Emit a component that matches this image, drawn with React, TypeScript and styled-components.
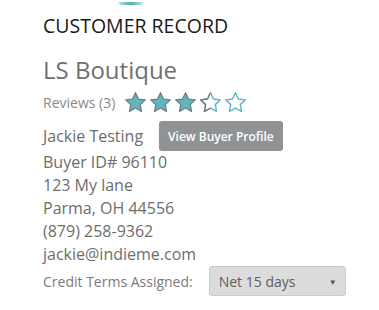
import React from "react";
import styled, { createGlobalStyle } from "styled-components";

const GlobalStyle = createGlobalStyle`
  body {
    margin: 0;
    background: #fff;
    font-family: "Open Sans", "Liberation Sans", sans-serif;
  }
`;

type Fill = "full" | "half" | "empty";

function Star({ fill }: { fill: Fill }) {
  const d =
    "M12 1.8l3.1 6.6 7.1.9-5.2 4.9 1.3 7.1L12 17.8l-6.3 3.5 1.3-7.1L1.8 9.3l7.1-.9z";
  if (fill === "full") {
    return (
      <svg width="23" height="23" viewBox="0 0 24 24">
        <path d={d} fill="#62b5bf" stroke="#6f7d80" strokeWidth="1.3" strokeLinejoin="round" />
      </svg>
    );
  }
  if (fill === "half") {
    return (
      <svg width="23" height="23" viewBox="0 0 24 24">
        <defs>
          <clipPath id="halfClip">
            <rect x="0" y="0" width="12" height="24" />
          </clipPath>
        </defs>
        <path d={d} fill="#fff" stroke="#5fb5c0" strokeWidth="1.5" strokeLinejoin="round" />
        <path d={d} fill="#fff" stroke="#6f7d80" strokeWidth="1.5" strokeLinejoin="round" clipPath="url(#halfClip)" />
      </svg>
    );
  }
  return (
    <svg width="23" height="23" viewBox="0 0 24 24">
      <path d={d} fill="#fff" stroke="#5fb5c0" strokeWidth="1.5" strokeLinejoin="round" />
    </svg>
  );
}

export default function App() {
  return (
    <Page>
      <GlobalStyle />
      <TopMark>
        <svg width="28" height="4" viewBox="0 0 28 4">
          <defs>
            <linearGradient id="topGrad" x1="0" x2="1">
              <stop offset="0" stopColor="#c9e6e8" />
              <stop offset="0.5" stopColor="#4fb0b4" />
              <stop offset="1" stopColor="#d4ecee" />
            </linearGradient>
          </defs>
          <path d="M0 0h28l-4 3H4z" fill="url(#topGrad)" />
        </svg>
      </TopMark>
      <Heading>CUSTOMER RECORD</Heading>
      <StoreName>LS Boutique</StoreName>
      <ReviewRow>
        <Reviews>Reviews (3)</Reviews>
        <Stars>
          <Star fill="full" />
          <Star fill="full" />
          <Star fill="full" />
          <Star fill="half" />
          <Star fill="empty" />
        </Stars>
      </ReviewRow>
      <BuyerRow>
        <InfoLine>Jackie Testing</InfoLine>
        <ProfileButton>View Buyer Profile</ProfileButton>
      </BuyerRow>
      <InfoLine>Buyer ID# 96110</InfoLine>
      <InfoLine>123 My lane</InfoLine>
      <InfoLine>Parma, OH 44556</InfoLine>
      <InfoLine>(879) 258-9362</InfoLine>
      <InfoLine>jackie@indieme.com</InfoLine>
      <TermsRow>
        <TermsLabel>Credit Terms Assigned:</TermsLabel>
        <TermsSelect>
          <span>Net 15 days</span>
          <Caret>▼</Caret>
        </TermsSelect>
      </TermsRow>
    </Page>
  );
}

const Page = styled.div`
  position: relative;
  width: 379px;
  height: 310px;
  padding: 14px 0 0 43px;
  box-sizing: border-box;
  color: #6d6d6d;
`;

const TopMark = styled.div`
  position: absolute;
  top: 0;
  left: 117px;
  line-height: 0;
`;

const Heading = styled.div`
  font-size: 19.5px;
  line-height: 24px;
  color: #1a1a1a;
`;

const StoreName = styled.div`
  margin-top: 15px;
  font-size: 24px;
  line-height: 34px;
  color: #707070;
`;

const ReviewRow = styled.div`
  display: flex;
  align-items: center;
  gap: 9px;
  height: 24px;
  margin-top: 3px;
`;

const Reviews = styled.span`
  font-size: 14px;
  color: #8a8a8a;
`;

const Stars = styled.div`
  display: flex;
  gap: 2px;
  line-height: 0;
`;

const BuyerRow = styled.div`
  display: flex;
  align-items: center;
  gap: 16px;
  margin-top: 7px;
`;

const InfoLine = styled.div`
  font-size: 16px;
  line-height: 23px;
  color: #6d6d6d;
`;

const ProfileButton = styled.button`
  height: 30px;
  padding: 0 9px;
  border: none;
  border-radius: 3px;
  background: #8f9396;
  color: #fff;
  font-family: "Open Sans", "Liberation Sans", sans-serif;
  font-size: 12px;
  font-weight: 600;
`;

const TermsRow = styled.div`
  display: flex;
  align-items: center;
  gap: 16px;
  margin-top: 0;
`;

const TermsLabel = styled.span`
  font-size: 14px;
  color: #7a7a7a;
`;

const TermsSelect = styled.div`
  display: flex;
  align-items: center;
  justify-content: space-between;
  width: 137px;
  height: 30px;
  box-sizing: border-box;
  padding: 0 8px 0 9px;
  border: 1px solid #cbcbcb;
  border-radius: 3px;
  background: #dcdcdc;
  font-size: 14px;
  color: #5f5f5f;
`;

const Caret = styled.span`
  font-size: 8px;
  color: #555;
`;
